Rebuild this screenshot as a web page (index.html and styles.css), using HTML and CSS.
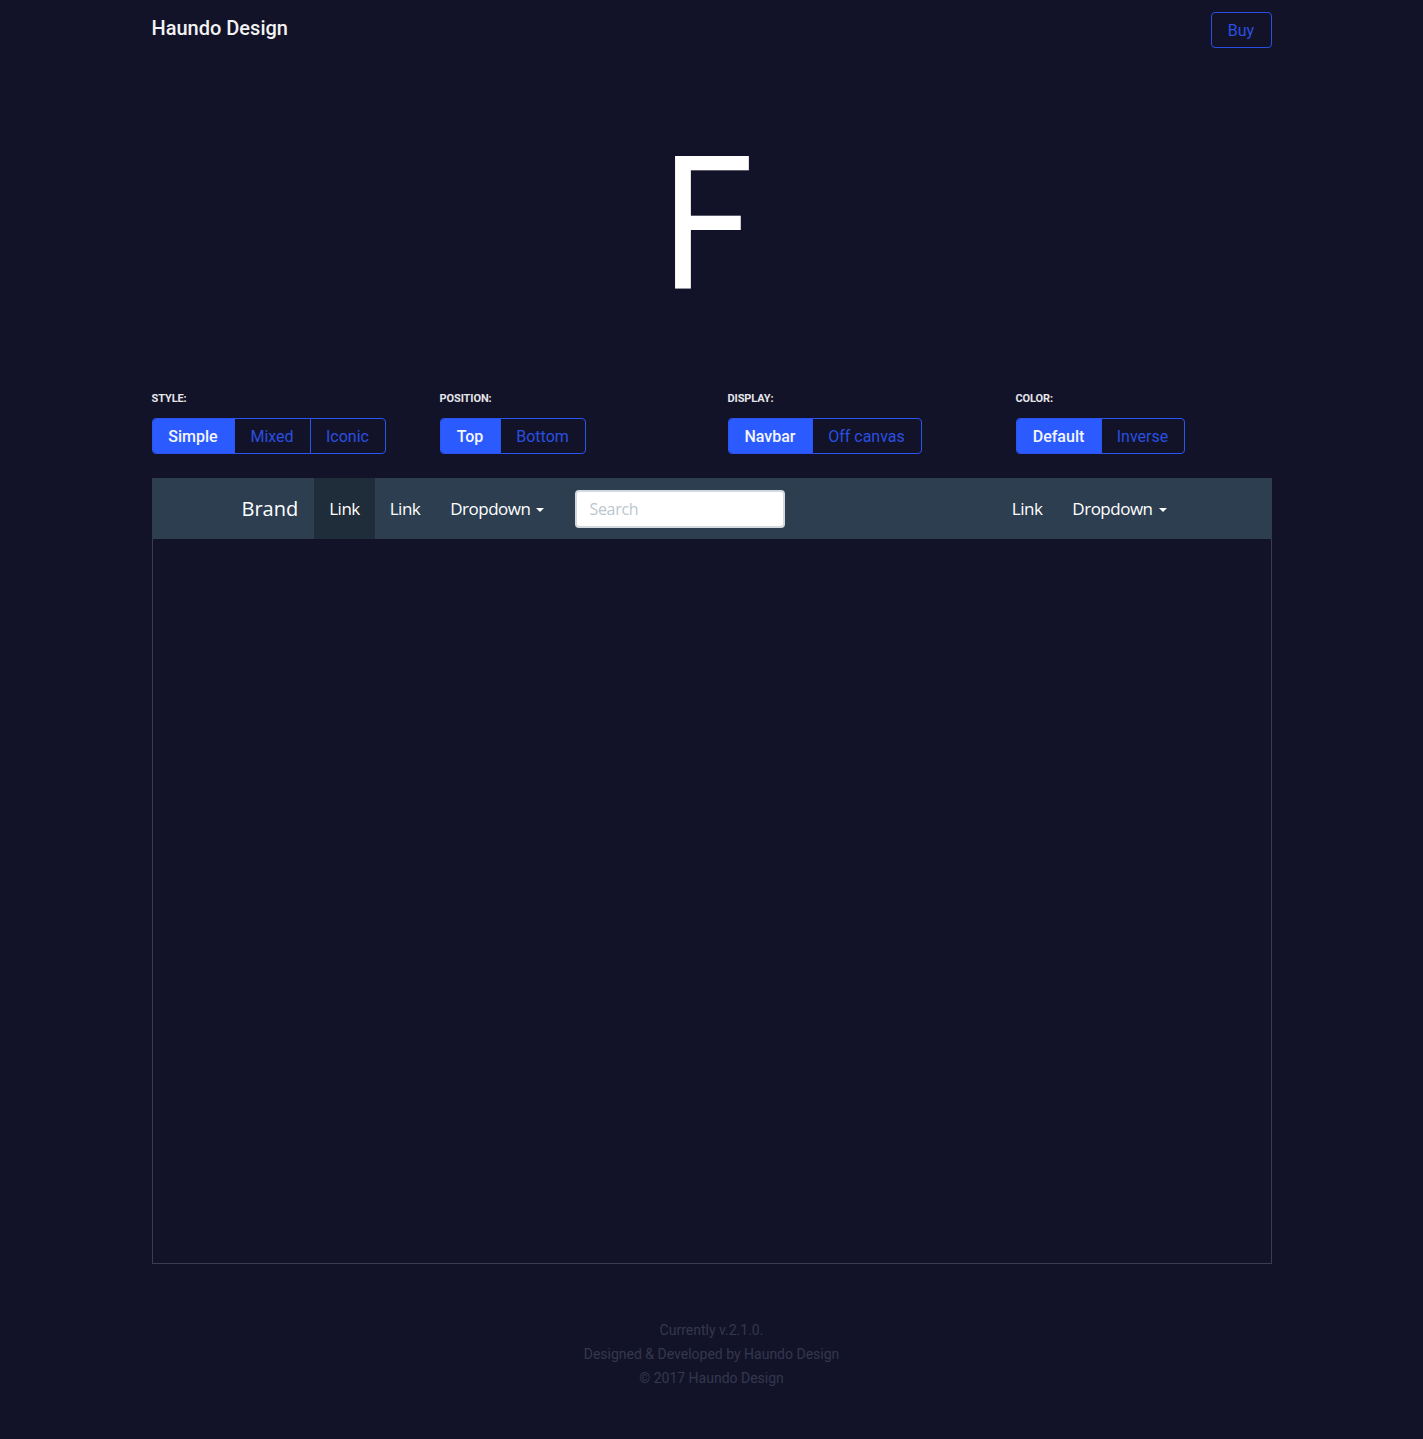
FILE: index.html
```html
<!DOCTYPE html>
<html>
<head>
<meta charset="utf-8">
<link rel="stylesheet" href="styles.css">
</head>
<body>
<div class="page">
  <header class="top">
    <div class="logo">Haundo Design</div>
    <a class="buy">Buy</a>
  </header>
  <div class="hero">F</div>
  <div class="options">
    <div class="opt">
      <div class="label">STYLE:</div>
      <div class="group"><span class="btn on w81">Simple</span><span class="btn w76">Mixed</span><span class="btn w75">Iconic</span></div>
    </div>
    <div class="opt">
      <div class="label">POSITION:</div>
      <div class="group"><span class="btn on w59">Top</span><span class="btn w85">Bottom</span></div>
    </div>
    <div class="opt">
      <div class="label">DISPLAY:</div>
      <div class="group"><span class="btn on w83">Navbar</span><span class="btn w109">Off canvas</span></div>
    </div>
    <div class="opt">
      <div class="label">COLOR:</div>
      <div class="group"><span class="btn on w84">Default</span><span class="btn w83">Inverse</span></div>
    </div>
  </div>
  <div class="preview">
    <nav class="nb">
      <span class="brand">Brand</span>
      <span class="nl active">Link</span>
      <span class="nl">Link</span>
      <span class="nl">Dropdown <span class="caret"></span></span>
      <div class="search">Search</div>
      <div class="spacer"></div>
      <span class="nl">Link</span>
      <span class="nl">Dropdown <span class="caret"></span></span>
    </nav>
  </div>
  <footer class="foot">
    <div>Currently v.2.1.0.</div>
    <div>Designed &amp; Developed by Haundo Design</div>
    <div>© 2017 Haundo Design</div>
  </footer>
</div>
</body>
</html>
```
FILE: styles.css
```css
html, body { margin: 0; padding: 0; }
body {
  background: #121328;
  font-family: Roboto, "Liberation Sans", sans-serif;
  color: #fff;
  height: 1439px;
}
.page { width: 1120px; margin: 0 auto; }
.top {
  display: flex; justify-content: space-between; align-items: flex-start;
  height: 48px;
}
.logo { font-size: 20px; font-weight: 500; color: #f2f2f5; margin-top: 17px; line-height: 22px; }
.buy {
  margin-top: 12px; box-sizing: border-box;
  width: 61px; height: 36px; border: 1px solid #2a4fe0; border-radius: 4px;
  color: #2a4fe0; font-size: 16px; display: flex; align-items: center; justify-content: center;
}
.hero {
  font-family: Roboto, sans-serif; font-weight: 400;
  font-size: 186px; line-height: 1; text-align: center;
  margin-top: 83px; height: 225px; color: #fff;
  padding-right: 10px;
  transform: scaleX(0.9);
}
.options { display: grid; grid-template-columns: 288px 288px 288px 1fr; margin-top: 36px; }
.label { font-size: 11px; font-weight: 700; color: #e6e6ea; line-height: 13px; height: 13px; letter-spacing: -0.1px; }
.group {
  display: inline-flex; margin-top: 13px; height: 36px; box-sizing: border-box;
  border: 1px solid #2a55f0; border-radius: 4px; overflow: hidden;
}
.btn {
  display: flex; align-items: center; justify-content: center;
  font-size: 16px; color: #2a4fe0; box-sizing: border-box;
  border-left: 1px solid #2a55f0;
}
.btn:first-child { border-left: 0; }
.btn.on { background: #2b5bff; color: #f4f6ff; font-weight: 500; }
.w81 { width: 81px; } .w76 { width: 76px; } .w75 { width: 75px; }
.w59 { width: 59px; } .w85 { width: 85px; }
.w83 { width: 83px; } .w109 { width: 109px; }
.w84 { width: 84px; }
.preview {
  margin-top: 24px; height: 786px; box-sizing: border-box;
  border: 1px solid #3a3c52; border-top: 0;
}
.nb {
  height: 61px; background: #2c3e50; display: flex; align-items: center;
  margin: 0 -1px; padding-left: 90px; padding-right: 90px;
  font-family: "Open Sans", sans-serif; color: #fff;
}
.brand { font-size: 20px; padding: 0 16px 0 0; line-height: 61px; }
.nl { font-size: 17px; padding: 0 15px; line-height: 61px; display: flex; align-items: center; letter-spacing: -0.5px; }
.nl.active { background: #1f2c39; }
.caret {
  display: inline-block; width: 0; height: 0; margin-left: 6px; margin-top: 2px;
  border-left: 4px solid transparent; border-right: 4px solid transparent; border-top: 4px solid #fff;
}
.search {
  margin-left: 16px; width: 210px; height: 38px; box-sizing: border-box;
  background: #fff; border: 2px solid #d3d9de; border-radius: 4px;
  color: #bcc6ce; font-size: 16px; padding-left: 12px; display: flex; align-items: center;
  letter-spacing: -0.3px;
}
.spacer { flex: 1; }
.foot {
  text-align: center; margin-top: 54px; font-size: 14px; line-height: 24px;
  color: #35374f;
}
```
